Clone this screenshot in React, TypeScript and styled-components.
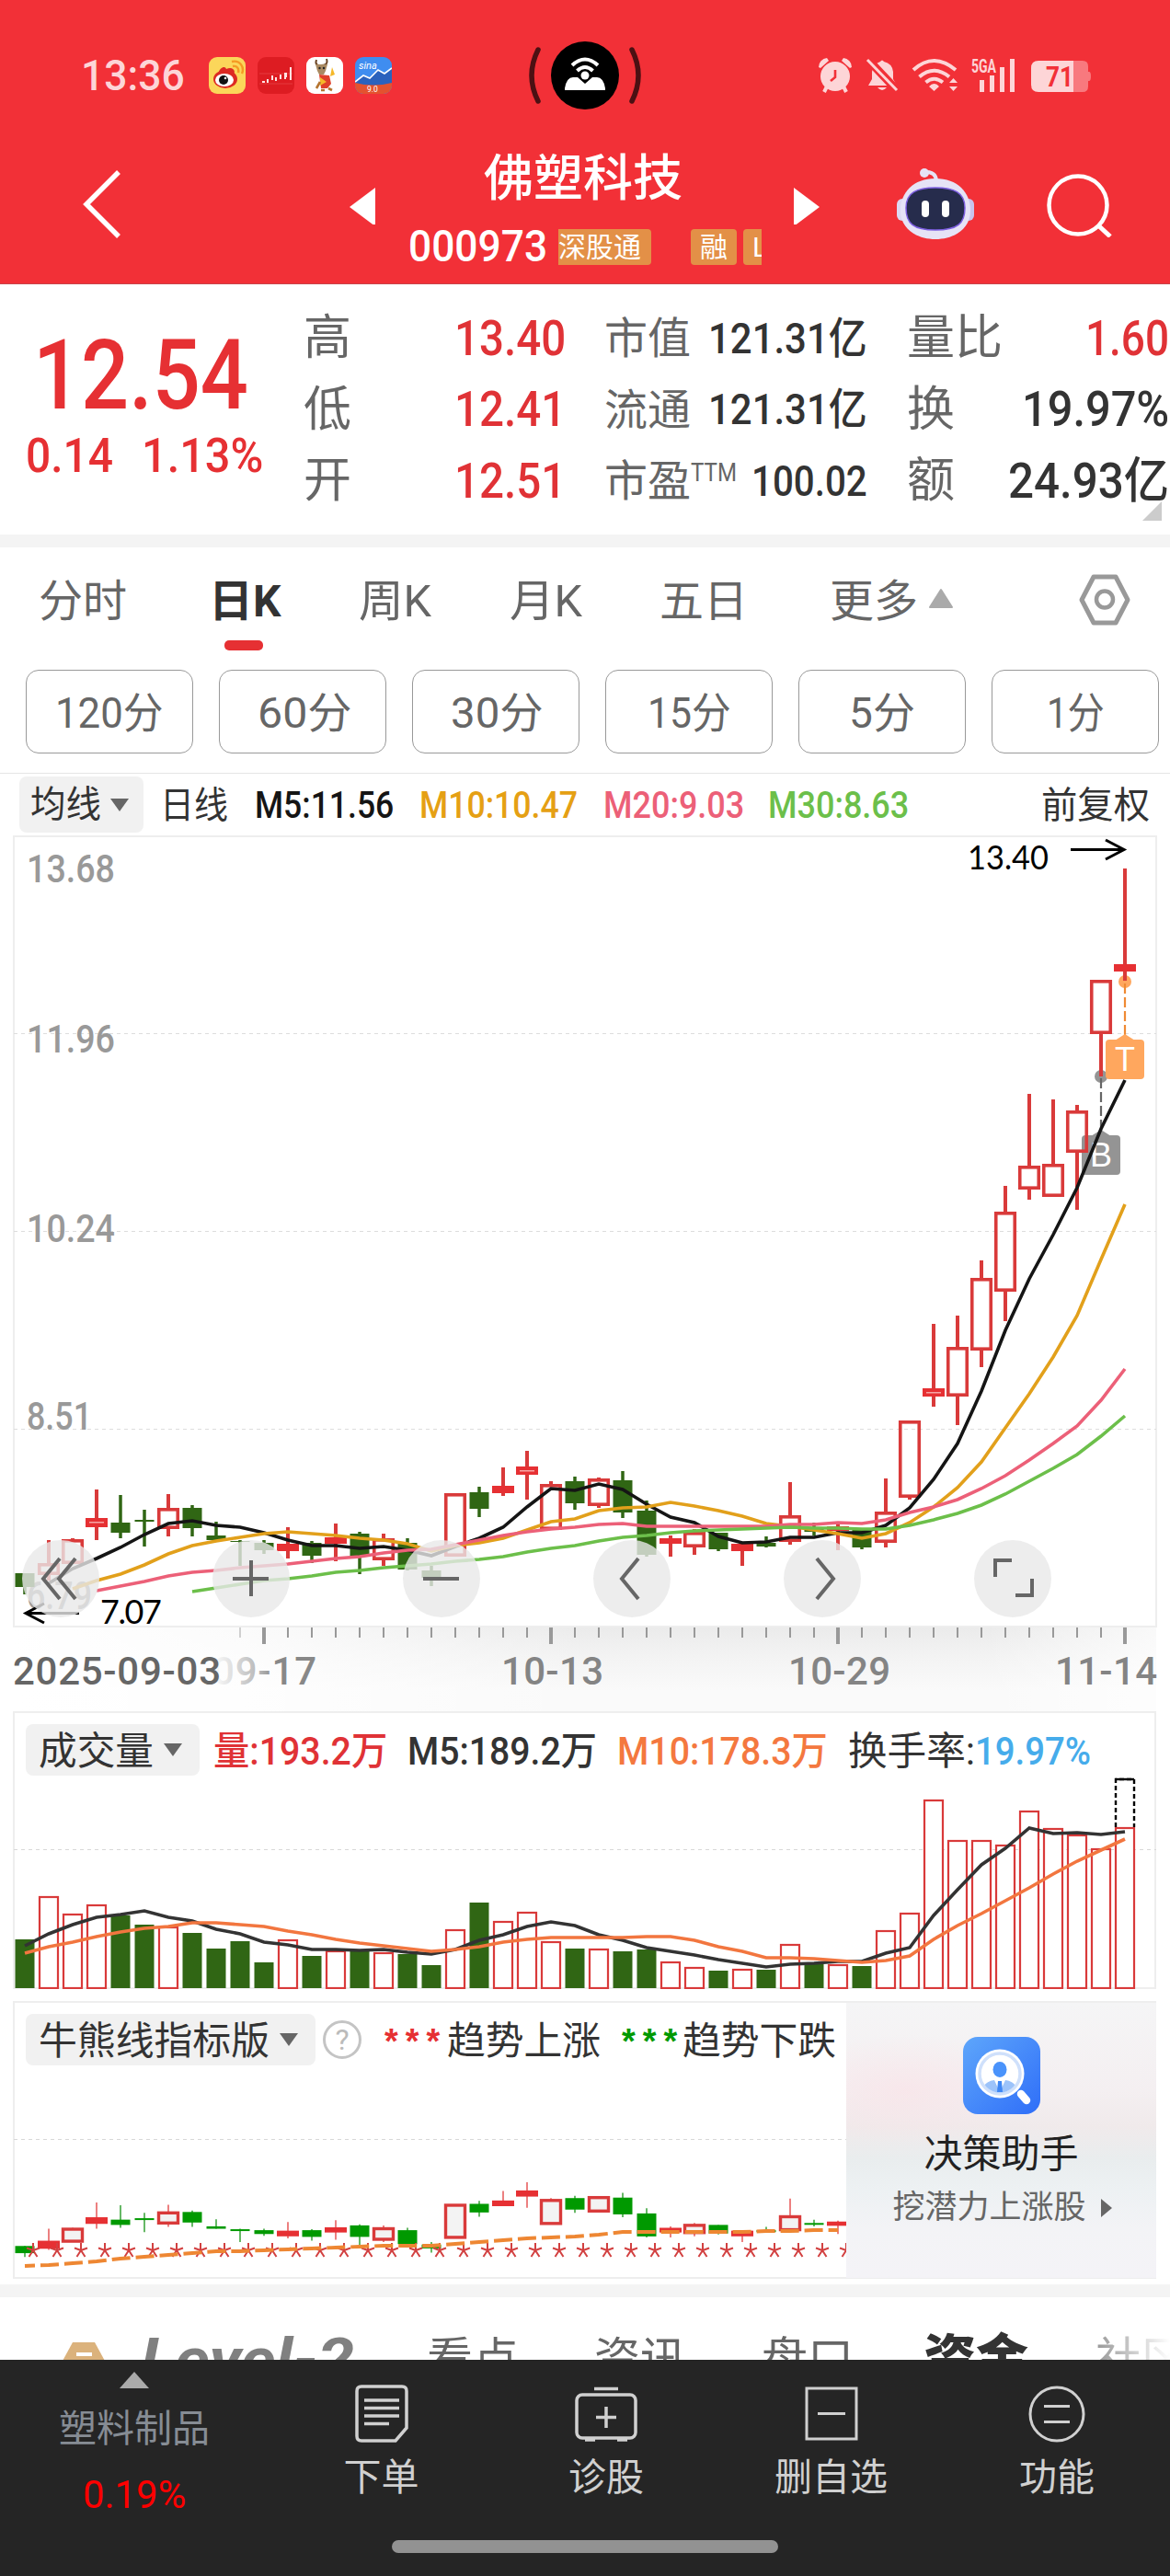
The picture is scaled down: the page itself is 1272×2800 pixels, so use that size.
import React, { useLayoutEffect, useRef, useState } from "react";
import styled, { createGlobalStyle } from "styled-components";

const RED = "#e63033";
const GREEN = "#306614";

const GlobalStyle = createGlobalStyle`
  body {
    margin: 0;
    background: #fff;
  }
  * {
    box-sizing: border-box;
  }
  body, svg text {
    font-family: "Roboto", "Noto Sans CJK SC", sans-serif;
  }
  svg {
    display: block;
    flex: none;
  }
`;

const Page = styled.div`
  width: 1272px;
  height: 2800px;
  overflow: hidden;
  display: flex;
  flex-direction: column;
  background: #fff;
`;

/* ---------- text squeezed to a given width (DIN-like digits) ---------- */

const FitBox = styled.span<{ $w: number; $ml?: number }>`
  display: block;
  flex: none;
  width: ${(p) => p.$w}px;
  margin-left: ${(p) => p.$ml || 0}px;
  white-space: nowrap;
`;
const FitInner = styled.span`
  display: inline-block;
  transform-origin: 0 50%;
  white-space: pre;
`;

type FitProps = { w: number; ml?: number; className?: string; children: React.ReactNode };

const Fit: React.FC<FitProps> = ({ w, ml, className, children }) => {
  const ref = useRef<HTMLSpanElement>(null);
  const [scale, setScale] = useState(1);
  useLayoutEffect(() => {
    if (ref.current && ref.current.offsetWidth) {
      setScale(w / ref.current.offsetWidth);
    }
  }, [w, children]);
  return (
    <FitBox $w={w} $ml={ml} className={className}>
      <FitInner ref={ref} style={{ transform: `scaleX(${scale})` }}>
        {children}
      </FitInner>
    </FitBox>
  );
};

/* ---------- header ---------- */

const Header = styled.header`
  height: 309px;
  background: #f23037;
  border-bottom: 1px solid #c9444a;
  color: #fff;
`;
const StatusBar = styled.div`
  height: 164px;
  display: flex;
  align-items: center;
  padding-left: 88px;
`;
const Clock = styled(Fit)`
  font-size: 46px;
  font-weight: 500;
  line-height: 54px;
  color: #fdd5d7;
`;
const AppIcons = styled.div`
  display: flex;
  gap: 13px;
  margin-left: 26px;
`;
const NavRow = styled.div`
  height: 144px;
  display: flex;
  align-items: center;
  padding: 0 0 28px 88px;
`;
const Spacer = styled.div<{ $w: number; $h?: number }>`
  flex: none;
  width: ${(p) => p.$w}px;
  height: ${(p) => p.$h || 0}px;
`;
const TitleBlock = styled.div`
  align-self: flex-start;
  width: 384px;
`;
const StockName = styled.div`
  height: 60px;
  line-height: 62px;
  padding-left: 82px;
  font-size: 54px;
  font-weight: 500;
`;
const CodeRow = styled.div`
  height: 42px;
  margin-top: 23px;
  display: flex;
  align-items: center;
`;
const Code = styled(Fit)`
  font-size: 49px;
  font-weight: 500;
  line-height: 44px;
`;
const Marquee = styled.div`
  display: flex;
  width: 221px;
  margin-left: 12px;
  overflow: hidden;
`;
const Tag = styled.div<{ $w: number; $ml?: number; $cut?: boolean }>`
  flex: none;
  width: ${(p) => p.$w}px;
  height: 39px;
  margin-left: ${(p) => p.$ml || 0}px;
  border-radius: ${(p) => (p.$cut ? "0 4px 4px 0" : "4px")};
  padding-left: ${(p) => (p.$cut ? 0 : 10)}px;
  background: #e39047;
  font-size: 30px;
  line-height: 39px;
  white-space: nowrap;
`;

/* ---------- quote ---------- */

const Quote = styled.section`
  position: relative;
  height: 272px;
  display: flex;
`;
const PriceBlock = styled.div`
  width: 331px;
  padding: 40px 0 0 36px;
  color: ${RED};
`;
const Price = styled(Fit)`
  font-size: 105px;
  font-weight: 500;
  line-height: 120px;
`;
const ChangeRow = styled.div`
  display: flex;
  margin: 0 0 0 -8px;
  font-size: 52px;
  line-height: 54px;
  font-weight: 500;
`;
const StatCol = styled.div<{ $w: number; $ml?: number }>`
  width: ${(p) => p.$w}px;
  margin-left: ${(p) => p.$ml || 0}px;
  padding-top: 20px;
  flex: none;
`;
const StatRow = styled.div`
  height: 77.5px;
  display: flex;
  justify-content: space-between;
  align-items: center;
  line-height: 78px;
  white-space: nowrap;
`;
const StatLabel = styled.span<{ $size: number }>`
  display: flex;
  padding-top: 1px;
  font-size: ${(p) => p.$size}px;
  color: #666;
`;
const Ttm = styled(Fit)`
  font-size: 27px;
  line-height: 60px;
`;
const StatValue = styled(Fit)<{ $size: number; $red?: boolean }>`
  font-size: ${(p) => p.$size}px;
  font-weight: 500;
  color: ${(p) => (p.$red ? "#e03236" : "#333")};
`;
const Corner = styled.div`
  position: absolute;
  left: 1242px;
  top: 236px;
  border-left: 21px solid transparent;
  border-bottom: 21px solid #ccc;
`;
const Band = styled.div<{ $h: number }>`
  flex: none;
  height: ${(p) => p.$h}px;
  background: #f4f4f4;
`;

/* ---------- period tabs ---------- */

const Tabs = styled.nav`
  height: 133px;
  display: flex;
  align-items: flex-start;
  padding: 12px 0 0 42px;
  color: #666;
`;
const Tab = styled.div<{ $ml?: number; $on?: boolean }>`
  flex: none;
  display: flex;
  flex-direction: column;
  align-items: center;
  margin-left: ${(p) => p.$ml || 0}px;
  font-size: 48px;
  line-height: 94px;
  font-weight: ${(p) => (p.$on ? 700 : 400)};
  color: ${(p) => (p.$on ? "#333" : "#666")};
  &::after {
    content: "";
    display: ${(p) => (p.$on ? "block" : "none")};
    width: 42px;
    height: 11px;
    margin: -5px 3px 0 0;
    border-radius: 5px;
    background: ${RED};
  }
`;
const MoreArrow = styled.svg`
  margin-left: 11px;
`;
const SettingsIcon = styled.svg`
  margin-left: 134px;
`;
const Minutes = styled.div`
  height: 112px;
  display: flex;
  gap: 28px;
  padding-left: 28px;
  flex: none;
`;
const MinuteButton = styled.button`
  flex: none;
  width: 182px;
  height: 91px;
  padding: 0;
  border: 1.5px solid #999;
  border-radius: 14px;
  background: #fff;
  color: #666;
  font: 400 46px/93px "Roboto", "Noto Sans CJK SC", sans-serif;
  display: flex;
  justify-content: center;
`;
const MaRow = styled.div`
  flex: none;
  height: 68px;
  border-top: 1px solid #e5e5e5;
  display: flex;
  align-items: flex-start;
  padding: 3px 0 0 21px;
  font-size: 40px;
  line-height: 64px;
  font-weight: 500;
`;
const Pill = styled.div<{ $w: number; $h: number; $pl: number }>`
  flex: none;
  width: ${(p) => p.$w}px;
  height: ${(p) => p.$h}px;
  padding-left: ${(p) => p.$pl}px;
  display: flex;
  align-items: center;
  border-radius: 8px;
  background: #f1f1f1;
  color: #333;
  font-weight: 400;
`;
const Legend = styled(Fit)<{ $c: string; $normal?: boolean }>`
  color: ${(p) => p.$c};
  font-weight: ${(p) => (p.$normal ? 400 : 500)};
`;
const DownTri = styled.i<{ $ml: number; $s?: number }>`
  margin-left: ${(p) => p.$ml}px;
  border: ${(p) => (p.$s || 10) + 0.5}px solid transparent;
  border-top: 14px solid #666;
  border-bottom: 0;
`;

/* ---------- charts ---------- */

const KPanel = styled.section`
  position: relative;
  flex: none;
  height: 952px;
`;
const RoundButtons = styled.div`
  position: absolute;
  left: 24px;
  top: 766px;
  display: flex;
  gap: 123px;
`;
const RoundButton = styled.button`
  width: 84px;
  height: 84px;
  padding: 0;
  border: 0;
  border-radius: 50%;
  background: rgba(232, 232, 232, 0.8);
  display: flex;
  align-items: center;
  justify-content: center;
`;
const VolumePanel = styled.section`
  position: relative;
  flex: none;
  width: 1243px;
  height: 302px;
  margin-left: 14px;
  border: 2px solid #eee;
`;
const BullPanel = styled(VolumePanel)`
  margin-top: 13px;
  display: flex;
`;
const PanelHead = styled.div`
  display: flex;
  align-items: center;
  height: 56px;
  margin: 12px 0 0 12px;
  font-size: 42px;
  line-height: 56px;
  font-weight: 500;
  ${FitBox} {
    padding-top: 3px;
  }
`;
const PlotLayer = styled.div<{ $w: number }>`
  position: absolute;
  left: -2px;
  top: -2px;
  width: ${(p) => p.$w}px;
  height: 302px;
  overflow: hidden;
  pointer-events: none;
`;
const Help = styled.div`
  width: 42px;
  height: 42px;
  flex: none;
  margin-left: 8px;
  border: 3px solid #c4c4c4;
  border-radius: 50%;
  color: #bbb;
  font-size: 32px;
  font-weight: 400;
  line-height: 36px;
  text-align: center;
`;
const Stars = styled.span<{ $c: string; $ml: number }>`
  flex: none;
  width: 70px;
  margin-left: ${(p) => p.$ml}px;
  color: ${(p) => p.$c};
  font-family: "Liberation Mono", monospace;
  font-weight: 700;
  font-size: 38px;
  line-height: 56px;
  padding-top: 11px;
`;
const Assistant = styled.div`
  position: absolute;
  right: -2px;
  top: 0;
  width: 337px;
  height: 299px;
  padding-top: 37px;
  display: flex;
  flex-direction: column;
  align-items: center;
  background: radial-gradient(ellipse 130px 60px at 65px 95px, rgba(250, 225, 230, 0.6), transparent),
    linear-gradient(#f5f5f6 0%, #f4eff1 32%, #f0eaeb 45%, #e9edee 57%, #edf1f3 68%, #f3f3f6 82%, #f4f3f7 100%);
`;
const AssistantTitle = styled.div`
  margin-top: 14px;
  font-size: 42px;
  line-height: 60px;
  color: #222;
`;
const AssistantSub = styled.div`
  display: flex;
  align-items: center;
  padding-left: 2px;
  font-size: 35px;
  line-height: 56px;
  color: #666;
  i {
    margin-left: 16px;
    border: 10px solid transparent;
    border-left: 12px solid #666;
    border-right: 0;
  }
`;

/* ---------- bottom ---------- */

const InfoTabs = styled.nav`
  position: relative;
  flex: none;
  height: 68px;
  overflow: hidden;
  display: flex;
  padding: 31px 0 0 66px;
  color: #666;
  font-size: 50px;
  line-height: 74px;
  white-space: nowrap;
`;
const InfoTab = styled.div<{ $ml: number; $on?: boolean }>`
  flex: none;
  margin-left: ${(p) => p.$ml}px;
  font-size: ${(p) => (p.$on ? 57 : 50)}px;
  font-weight: ${(p) => (p.$on ? 900 : 400)};
  color: ${(p) => (p.$on ? "#333" : "inherit")};
`;
const Level2 = styled(Fit)`
  font-weight: 700;
  font-style: italic;
  font-size: 62px;
  color: #808080;
`;
const FadeRight = styled.div`
  position: absolute;
  right: 0;
  top: 0;
  width: 90px;
  height: 68px;
  background: linear-gradient(90deg, rgba(255, 255, 255, 0.25), #fff);
`;
const NavBar = styled.footer`
  flex: none;
  height: 235px;
  background: #252525;
  color: #d0d0d0;
  font-size: 41px;
  line-height: 60px;
`;
const NavItems = styled.div`
  display: grid;
  grid-template-columns: 292px 245px 244px 245px 246px;
  height: 196px;
`;
const NavItem = styled.div`
  display: flex;
  flex-direction: column;
  align-items: center;
  padding-top: 24px;
  svg {
    margin-bottom: 6px;
  }
`;
const Sector = styled.div`
  display: flex;
  flex-direction: column;
  align-items: center;
  padding-top: 13px;
  color: #868c94;
  i {
    border: 16px solid transparent;
    border-bottom: 18px solid #aaa;
    border-top: 0;
    margin-bottom: 14px;
  }
  b {
    margin-top: 11px;
    font-weight: 400;
    font-size: 43px;
    color: #f00;
  }
`;
const HomeBar = styled.div`
  width: 420px;
  height: 14px;
  margin: 0 auto;
  border-radius: 7px;
  background: #929292;
`;

/* ---------- data: [dir, high, top, bottom, low] in plot pixels ---------- */

type Candle = [0 | 1, number, number, number, number];

const candles: Candle[] = [
  [0, 1710, 1710, 1725, 1733], [1, 1674, 1699, 1712, 1718], [1, 1672, 1673, 1700, 1700],
  [1, 1619, 1650, 1660, 1674], [0, 1625, 1655, 1666, 1672], [0, 1641, 1652, 1654, 1681],
  [1, 1624, 1639, 1662, 1670], [0, 1636, 1639, 1661, 1670], [0, 1654, 1669, 1674, 1674],
  [0, 1674, 1675, 1676, 1702], [0, 1674, 1677, 1685, 1689], [1, 1660, 1678, 1686, 1694],
  [0, 1675, 1677, 1691, 1699], [1, 1656, 1671, 1678, 1697], [0, 1665, 1667, 1691, 1711],
  [1, 1667, 1672, 1696, 1702], [0, 1672, 1677, 1706, 1707], [0, 1702, 1707, 1715, 1724],
  [1, 1623, 1623, 1692, 1692], [0, 1616, 1622, 1640, 1649], [1, 1595, 1615, 1623, 1626],
  [1, 1577, 1594, 1603, 1630], [1, 1610, 1613, 1663, 1663], [0, 1605, 1610, 1634, 1641],
  [1, 1606, 1607, 1637, 1639], [0, 1599, 1609, 1644, 1650], [0, 1631, 1642, 1690, 1692],
  [1, 1669, 1672, 1678, 1692], [1, 1662, 1665, 1682, 1690], [0, 1666, 1666, 1684, 1686],
  [1, 1678, 1678, 1686, 1702], [0, 1670, 1677, 1681, 1682], [1, 1611, 1647, 1676, 1679],
  [0, 1655, 1662, 1665, 1669], [1, 1657, 1659, 1664, 1685], [0, 1662, 1663, 1682, 1684],
  [1, 1607, 1643, 1677, 1682], [1, 1544, 1544, 1628, 1630], [1, 1439, 1509, 1518, 1529],
  [1, 1430, 1464, 1518, 1549], [1, 1370, 1389, 1468, 1486], [1, 1289, 1317, 1404, 1436],
  [1, 1189, 1267, 1293, 1304], [1, 1195, 1265, 1301, 1301], [1, 1201, 1207, 1253, 1315],
  [1, 1065, 1065, 1124, 1170], [1, 944, 1048, 1056, 1066],
];

const ma5 = [
  1721, 1705, 1694, 1682, 1668, 1656, 1653, 1658, 1660, 1666, 1674, 1680, 1680, 1683, 1681, 1685,
  1691, 1681, 1672, 1660, 1638, 1618, 1620, 1613, 1619, 1635, 1649, 1655, 1670, 1677, 1676, 1671,
  1671, 1666, 1666, 1658, 1639, 1608, 1569, 1512, 1446, 1390, 1342, 1291, 1227, 1174,
];
const ma10 = [
  1727, 1718, 1711, 1701, 1689, 1680, 1675, 1671, 1667, 1665, 1667, 1669, 1672, 1674, 1678, 1686,
  1680, 1677, 1672, 1663, 1654, 1651, 1642, 1639, 1638, 1633, 1637, 1642, 1648, 1656, 1659, 1663,
  1667, 1672, 1667, 1655, 1638, 1617, 1589, 1552, 1515, 1475, 1430, 1369, 1309,
];
const ma20 = [
  1729, 1724, 1719, 1713, 1709, 1707, 1704, 1702, 1700, 1697, 1694, 1692, 1688, 1685, 1684, 1679,
  1674, 1669, 1665, 1662, 1660, 1657, 1656, 1659, 1659, 1659, 1659, 1659, 1659, 1657, 1657, 1655,
  1656, 1652, 1644, 1638, 1630, 1618, 1604, 1587, 1569, 1550, 1522, 1488,
];
const ma30 = [
  1730, 1726, 1722, 1718, 1716, 1713, 1709, 1707, 1704, 1702, 1700, 1697, 1695, 1692, 1687, 1683,
  1680, 1675, 1671, 1669, 1666, 1664, 1663, 1662, 1661, 1660, 1661, 1661, 1662, 1662, 1658, 1652,
  1645, 1636, 1624, 1610, 1596, 1581, 1561, 1539,
];

const volumes = [
  2108, 2061, 2080, 2070, 2082, 2092, 2094, 2101, 2118, 2110, 2133, 2108, 2126, 2120, 2121, 2122,
  2124, 2136, 2097, 2068, 2088, 2078, 2110, 2118, 2118, 2121, 2119, 2132, 2138, 2142, 2140, 2141,
  2113, 2135, 2135, 2137, 2098, 2079, 1956, 2000, 2000, 2005, 1968, 1987, 1994, 2009, 1986,
];
const vma5 = [
  2115, 2102, 2092, 2084, 2081, 2077, 2084, 2088, 2097, 2102, 2111, 2114, 2119, 2119, 2120, 2119,
  2122, 2124, 2119, 2109, 2103, 2094, 2089, 2093, 2103, 2109, 2117, 2121, 2125, 2130, 2134, 2138,
  2135, 2134, 2132, 2132, 2123, 2117, 2082, 2054, 2027, 2009, 1987, 1993, 1992, 1994, 1991,
];
const vma10 = [
  2123, 2116, 2111, 2105, 2100, 2096, 2094, 2090, 2090, 2092, 2094, 2099, 2103, 2108, 2112, 2115,
  2118, 2121, 2119, 2116, 2111, 2108, 2106, 2106, 2106, 2106, 2105, 2105, 2109, 2116, 2121, 2128,
  2128, 2129, 2131, 2133, 2131, 2126, 2108, 2093, 2080, 2066, 2052, 2037, 2023, 2011, 1999,
];
const bull = [
  2463, 2462, 2460, 2458, 2455, 2453, 2451, 2449, 2447, 2447, 2446, 2445, 2444, 2443, 2442, 2441,
  2441, 2441, 2439, 2437, 2435, 2433, 2432, 2431, 2429, 2426, 2426, 2426, 2426, 2426, 2426, 2425,
  2425, 2424, 2424,
];

const px = (i: number) => 27 + i * 26;
const line = (ys: number[], from: number) => ys.map((y, i) => `${px(i + from)},${y}`).join(" ");
const mini = (y: number) => 2396 + (y - 1623) * 0.5205;

const Curve: React.FC<{ ys: number[]; from: number; color: string }> = ({ ys, from, color }) => (
  <polyline points={line(ys, from)} fill="none" stroke={color} strokeWidth="3.6" />
);

const Marker: React.FC<{ x: number; dot: number; y: number; color: string; dash: string; text: string }> = ({
  x,
  dot,
  y,
  color,
  dash,
  text,
}) => (
  <g>
    <circle cx={x} cy={dot} r="7" fill={color} />
    <path d={`M${x} ${dot + 2}V${y - 5}`} stroke={dash} strokeWidth="2.2" strokeDasharray="11 4" />
    <path d={`M${x - 11} ${y + 1}L${x} ${y - 6}L${x + 11} ${y + 1}Z`} fill={color} />
    <rect x={x - 21} y={y} width="42" height="43" rx="4" fill={color} />
    <text x={x} y={y + 34} fontSize="36" fill="#fff" textAnchor="middle" style={{ fontFamily: "Liberation Sans" }}>
      {text}
    </text>
  </g>
);

const grids = [1123.5, 1338.5, 1553.5];
const prices: [string, number, number][] = [
  ["13.68", 959, 96],
  ["11.96", 1144, 96],
  ["10.24", 1350, 96],
  ["8.51", 1554, 71],
  ["6.79", 1749, 71],
];

const KLine: React.FC = () => (
  <svg width="1272" height="952" viewBox="0 908 1272 952">
    <defs>
      <linearGradient id="axisY" x1="0" y1="0" x2="0" y2="1">
        <stop offset="0" stopColor="#ebebeb" />
        <stop offset="0.35" stopColor="#f3f3f3" />
        <stop offset="0.75" stopColor="#fafafa" />
        <stop offset="1" stopColor="#fafafa" />
      </linearGradient>
      <linearGradient id="axisX">
        <stop offset="0" stopColor="#fff" />
        <stop offset="0.2" stopColor="#fff" stopOpacity="0.8" />
        <stop offset="0.5" stopColor="#fff" stopOpacity="0" />
        <stop offset="0.85" stopColor="#fff" stopOpacity="0" />
        <stop offset="1" stopColor="#fff" stopOpacity="0.7" />
      </linearGradient>
      <linearGradient id="dateFade">
        <stop offset="0" stopColor="#888" stopOpacity="0" />
        <stop offset="0.45" stopColor="#888" stopOpacity="0.6" />
        <stop offset="0.6" stopColor="#888" />
      </linearGradient>
    </defs>
    <rect x="15" y="909" width="1242" height="859" fill="none" stroke="#eee" strokeWidth="2" />
    {grids.map((y) => (
      <path key={y} d={`M15 ${y}H1257`} stroke="#ddd" strokeWidth="1" strokeDasharray="4 4" />
    ))}
    {prices.map(([t, y, w]) => (
      <text key={t} x="29" y={y} fontSize="42" fontWeight="500" fill="#999" textLength={w} lengthAdjust="spacingAndGlyphs">
        {t}
      </text>
    ))}
    <Marker x={1197} dot={1170} y={1234} color="#949494" dash="#666" text="B" />
    <Marker x={1223} dot={1067} y={1130} color="#ffa75e" dash="#ef8a34" text="T" />
    {candles.map(([up, h, t, b, l], i) =>
      up ? (
        <g key={i} stroke="#d93a3a">
          <path d={`M${px(i)} ${h}V${t}M${px(i)} ${b}V${l}`} strokeWidth="4" />
          {b - t <= 10 ? (
            <>
              <rect x={px(i) - 12} y={t} width="24" height={b - t} fill={RED} stroke="none" />
              {b - t > 8 && <rect x={px(i) - 8} y={t + 4} width="16" height="1.5" fill="#f6a5a5" stroke="none" />}
            </>
          ) : (
            <rect x={px(i) - 10.25} y={t + 1.8} width="20.5" height={b - t - 3.6} fill="none" strokeWidth="3.6" />
          )}
        </g>
      ) : (
        <g key={i}>
          <path d={`M${px(i)} ${h}V${l}`} stroke={GREEN} strokeWidth="3.5" />
          <rect x={px(i) - 10.5} y={t} width="21" height={b - t} fill={GREEN} />
        </g>
      )
    )}
    <Curve ys={ma5} from={1} color="#151515" />
    <Curve ys={ma10} from={2} color="#e2a01b" />
    <Curve ys={ma20} from={3} color="#ec6078" />
    <Curve ys={ma30} from={7} color="#6cbf4a" />

    <text x="1052" y="945" fontSize="36" textLength="88" lengthAdjust="spacingAndGlyphs" style={{ fontFamily: "Lato" }}>
      13.40
    </text>
    <path d="M1164 923.5H1221M1202 913L1222 923.5L1202 934" fill="none" stroke="#000" strokeWidth="3" />
    <text x="109" y="1765" fontSize="36" textLength="67" style={{ fontFamily: "Lato" }}>
      7.07
    </text>
    <path d="M86 1753.5H28M48 1743L28 1753.5L48 1764" fill="none" stroke="#000" strokeWidth="3" />

    <rect x="15" y="1769" width="1242" height="91" fill="url(#axisY)" />
    <rect x="15" y="1769" width="1242" height="91" fill="url(#axisX)" />
    {candles.map((_, i) => {
      if (i < 9) {
        return null;
      }
      const major = i % 12 === 10;
      return (
        <path
          key={i}
          d={`M${px(i)} 1769V${major ? 1787 : 1780}`}
          stroke={i === 9 ? "#d0d0d0" : "#999"}
          strokeWidth={major ? 4 : 2}
        />
      );
    })}
    <g fontSize="42" fontWeight="500" fill="#848484">
      <text x="231" y="1831" fill="url(#dateFade)" textLength="113">09-17</text>
      <text x="545" y="1831" textLength="111">10-13</text>
      <text x="857" y="1831" textLength="111">10-29</text>
      <text x="1147" y="1831" textLength="111">11-14</text>
      <text x="14" y="1831" fill="#666" textLength="226">2025-09-03</text>
    </g>
  </svg>
);

const VolumePlot: React.FC = () => (
  <svg width="1243" height="302" viewBox="14 1860 1243 302">
    <path d="M15 2010.5H1257" stroke="#d8d8d8" strokeWidth="1" strokeDasharray="4 4" />
    {volumes.map((y, i) =>
      candles[i][0] ? (
        <rect key={i} x={px(i) - 10} y={y + 1} width="20" height={2160 - y} fill="#fff" stroke="#d93a3a" strokeWidth="2.2" />
      ) : (
        <rect key={i} x={px(i) - 10.5} y={y} width="21" height={2161 - y} fill={GREEN} />
      )
    )}
    <path d="M1213 1986V1934H1233V1986" fill="none" stroke="#000" strokeWidth="2.4" strokeDasharray="5 3" />
    <path d="M1213 1934H1233" stroke="#000" strokeWidth="2.4" />
    <Curve ys={vma5} from={0} color="#333" />
    <Curve ys={vma10} from={0} color="#f2763f" />
  </svg>
);

const BullPlot: React.FC = () => (
  <svg width="907" height="302" viewBox="14 2175 907 302">
    <path d="M15 2325.5H921" stroke="#d8d8d8" strokeWidth="1" strokeDasharray="4 4" />
    {candles.slice(0, 35).map(([up, h, t, b, l], i) => {
      const top = mini(t);
      const height = Math.max(mini(b) - top, 2);
      return (
        <g key={i}>
          <path d={`M${px(i)} ${mini(h)}V${mini(l)}`} stroke={up ? "#ec8080" : "#66b866"} strokeWidth="2" />
          {up ? (
            height > 8 ? (
              <rect x={px(i) - 10.5} y={top + 1} width="21" height={height - 1} fill="#f3f3f3" stroke="#d93a3a" strokeWidth="3.4" />
            ) : (
              <rect x={px(i) - 12} y={top} width="24" height={height + 2} fill={RED} />
            )
          ) : (
            <rect x={px(i) - 10.5} y={top} width="21" height={height} fill="#009900" />
          )}
        </g>
      );
    })}
    {candles.slice(0, 35).map((_, i) => (
      <path
        key={i}
        transform={`translate(${px(i) + 9} 2446)`}
        d="M0 0V-8M0 0L7 -2.5M0 0L4.5 7M0 0L-4.5 7M0 0L-7 -2.5"
        stroke="#d24040"
        strokeWidth="2"
      />
    ))}
    <polyline points={line(bull, 0)} fill="none" stroke="#ee8733" strokeWidth="4" strokeDasharray="20 6" strokeDashoffset="9" />
  </svg>
);

/* ---------- icons ---------- */

const WeiboIcon = () => (
  <svg width="40" height="40" viewBox="0 0 40 40">
    <rect width="40" height="40" rx="9" fill="#fbd65a" />
    <ellipse cx="18" cy="24" rx="13" ry="10" fill="#dd2a22" />
    <path d="M10 18C12 11 18 9 19 13C25 10 30 14 27 19Z" fill="#dd2a22" />
    <ellipse cx="17" cy="25" rx="10" ry="7" fill="#fff" />
    <circle cx="16" cy="25" r="5" fill="#111" />
    <circle cx="18" cy="23" r="1.3" fill="#fff" />
    <path d="M26 10C31 9 33 13 32 17M25 5C34 3 39 11 36 18" fill="none" stroke="#f59a23" strokeWidth="2.4" />
  </svg>
);
const CandleApp = () => (
  <svg width="40" height="40" viewBox="0 0 40 40">
    <rect width="40" height="40" rx="9" fill="#dd1c22" />
    <path d="M2 18H38M2 29H38" stroke="#e8474b" strokeWidth="0.7" />
    <path d="M5 27H8M11 24V28M16 20V25M20 22V26M25 19V24M30 17V24M36 11V25M31 22V17" stroke="#ffe3e3" strokeWidth="2" fill="none" />
  </svg>
);
const BullApp = () => (
  <svg width="40" height="40" viewBox="0 0 40 40">
    <rect width="40" height="40" rx="9" fill="#fff" />
    <path d="M11 3C9 9 13 9 16 9C20 9 24 8 22 2" fill="none" stroke="#6b4423" strokeWidth="2" />
    <path d="M10 8H23L21 15L19 19H14L12 15Z" fill="#a98a62" />
    <path d="M14 19L25 20L27 29L23 34H16Z" fill="#e0402a" />
    <path d="M26 21L28 11L31 19ZM15 22L22 27L15 31Z" fill="#f5b829" />
    <path d="M11 34L15 27M16 36H20M24 34L28 36" stroke="#b5742f" strokeWidth="2.6" />
    <circle cx="14.500" cy="12" r="1.2" fill="#222" />
    <circle cx="19" cy="12" r="1.2" fill="#222" />
  </svg>
);
const SinaApp = () => (
  <svg width="40" height="40" viewBox="0 0 40 40">
    <clipPath id="sina">
      <rect width="40" height="40" rx="9" />
    </clipPath>
    <g clipPath="url(#sina)">
      <rect width="40" height="40" fill="#3f8df0" />
      <path d="M0 27L9 20L16 23L25 14L32 18L40 12V32H0Z" fill="#2b62bd" />
      <path d="M0 27L9 20L16 23L25 14L32 18L40 12" fill="none" stroke="#fff" strokeWidth="1.6" />
      <path d="M0 28Q20 33 40 28V40H0Z" fill="#e4522f" />
      <text x="4" y="13" fontSize="11" fontStyle="italic" fill="#fff">sina</text>
      <text x="13" y="38" fontSize="8.500" fill="#fff">9.0</text>
    </g>
  </svg>
);
const Hotspot = () => (
  <svg width="128" height="76" viewBox="-8 0 128 76">
    <circle cx="56" cy="38" r="37" fill="#000" />
    <path d="M5 10Q-9 38 5 66M107 10Q121 38 107 66" fill="none" stroke="#4c1013" strokeWidth="5.500" strokeLinecap="round" />
    <path d="M34 52Q36 40 43 40H48L56 47L64 40H69Q76 40 78 52V54H34Z" fill="#fff" />
    <path d="M42 27Q56 14 70 27M47.5 33Q56 25 64.5 33" fill="none" stroke="#fff" strokeWidth="4" />
    <circle cx="56" cy="38" r="4.5" fill="#fff" />
  </svg>
);
const StatusIcons = () => (
  <svg width="300" height="40" viewBox="886 62 300 40" fill="#fdd5d7">
    <circle cx="908" cy="83" r="16" />
    <path d="M890 73A10 10 0 0 1 899 63L901 66L892 74ZM926 73A10 10 0 0 0 917 63L915 66L924 74Z" />
    <path d="M899 94L896 100M917 94L920 100" stroke="#fdd5d7" strokeWidth="4" />
    <path d="M908 76V84L903 88" fill="none" stroke="#f23037" strokeWidth="2.6" />
    <path d="M957 67Q959 64 961 67Q970 69 971 78V86L975 93H944L948 86V78Q949 70 957 67Z" />
    <path d="M954 95Q959 101 964 95Z" />
    <path d="M942 63L977 100" stroke="#f23037" strokeWidth="9" />
    <path d="M943 65L975 98" stroke="#fdd5d7" strokeWidth="3" />
    <path d="M993 76Q1015 56 1039 76M999.500 83.500Q1015.500 70 1032 83.500M1006.500 89.500Q1015.500 82 1025 89.500" fill="none" stroke="#fdd5d7" strokeWidth="4" />
    <path d="M1010 94Q1015.500 88 1021 94L1015.500 99ZM1032 90L1036.500 85L1041 90ZM1032 94L1036.500 99L1041 94Z" />
    <text x="1056" y="79" fontSize="21" fontWeight="700" textLength="27" lengthAdjust="spacingAndGlyphs">5GA</text>
    <path d="M1065 87h5v13h-5zM1076 82h5v18h-5zM1087 73h5v27h-5zM1098 64h5v36h-5z" />
    <path d="M1167 66H1177Q1183 66 1183 72V78H1184Q1186 78 1186 83Q1186 88 1184 88H1183V94Q1183 100 1177 100H1167Z" fill="#f8797e" />
    <path d="M1129 66H1167V100H1129Q1121 100 1121 92V74Q1121 66 1129 66Z" />
    <text x="1137" y="94" fontSize="32" fontWeight="700" fill="#f23037" textLength="30" lengthAdjust="spacingAndGlyphs">71</text>
  </svg>
);
const Robot = () => (
  <svg width="84" height="78" viewBox="0 0 84 78">
    <circle cx="30" cy="5" r="5" fill="#e6e2f5" />
    <path d="M30 4Q42 3 43 13" fill="none" stroke="#e6e2f5" strokeWidth="4" />
    <rect x="0" y="33" width="12" height="24" rx="6" fill="#dcd8f2" />
    <rect x="72" y="33" width="12" height="24" rx="6" fill="#c9c3ee" />
    <path d="M42 11C66 11 80 26 80 46C80 66 62 77 42 77C22 77 4 66 4 46C4 26 18 11 42 11Z" fill="#e6e3f6" />
    <path d="M42 21C62 21 74 26 74 43C74 60 66 67 42 67C18 67 10 60 10 43C10 26 22 21 42 21Z" fill="#262c4c" stroke="#7d5fe0" strokeWidth="1.500" />
    <rect x="27" y="35" width="8" height="18" rx="4" fill="#fff" />
    <rect x="49" y="35" width="8" height="18" rx="4" fill="#fff" />
  </svg>
);
const DecisionIcon = () => (
  <svg width="84" height="84" viewBox="0 0 84 84">
    <defs>
      <linearGradient id="dec" x1="0" y1="0" x2="1" y2="1">
        <stop offset="0" stopColor="#5ea6fb" />
        <stop offset="1" stopColor="#2f6ef8" />
      </linearGradient>
      <clipPath id="lens">
        <circle cx="40" cy="40" r="20.500" />
      </clipPath>
    </defs>
    <rect width="84" height="84" rx="16" fill="url(#dec)" />
    <circle cx="40" cy="40" r="26.500" fill="#fff" />
    <circle cx="40" cy="40" r="22" fill="#fff" stroke="#cfe0fb" strokeWidth="3.500" />
    <g clipPath="url(#lens)">
      <path d="M22 62V54Q26 48 34 47L40 60L46 47Q54 48 58 54V62Z" fill="#9cc3fa" />
      <path d="M38 48H42L43 60H37Z" fill="#3f87f5" />
    </g>
    <ellipse cx="40" cy="35.500" rx="7.500" ry="8.500" fill="#4a93fb" />
    <path d="M63 62L69 69" stroke="#fff" strokeWidth="8.500" strokeLinecap="round" />
  </svg>
);

const legends: [string, string, number, number][] = [
  ["M5:11.56", "#151515", 151, 29],
  ["M10:10.47", "#e5a014", 172, 28],
  ["M20:9.03", "#ec6078", 153, 28],
  ["M30:8.63", "#6cbf4a", 153, 26],
];

const minutes: [string, number][] = [
  ["120分", 118],
  ["60分", 103],
  ["30分", 101],
  ["15分", 91],
  ["5分", 72],
  ["1分", 63],
];

const buttonPaths = [
  "M41 20L23 42L41 64M58 20L40 42L58 64",
  "M42 22V61M22 42H61",
  "M22 42H61",
  "M49 20L31 42L49 64",
  "M36 20L54 42L36 64",
  "M23 40V22H41M45 60H63V42",
];

const App: React.FC = () => {
  return (
    <Page>
      <GlobalStyle />
      <Header>
        <StatusBar>
          <Clock w={113}>13:36</Clock>
          <AppIcons>
            <WeiboIcon />
            <CandleApp />
            <BullApp />
            <SinaApp />
          </AppIcons>
          <Spacer $w={146} />
          <Hotspot />
          <Spacer $w={186} />
          <StatusIcons />
        </StatusBar>
        <NavRow>
          <svg width="44" height="76" viewBox="0 0 44 76">
            <path d="M41 3L6 38L41 73" fill="none" stroke="#fff" strokeWidth="5.500" />
          </svg>
          <Spacer $w={248} />
          <svg width="28" height="44" viewBox="0 0 28 44">
            <path d="M28 4V46L0 25Z" fill="#fff" />
          </svg>
          <Spacer $w={36} />
          <TitleBlock>
            <StockName>佛塑科技</StockName>
            <CodeRow>
              <Code w={151}>000973</Code>
              <Marquee>
                <Tag $w={101} $cut>深股通</Tag>
                <Tag $w={50} $ml={43}>融</Tag>
                <Tag $w={50} $ml={7}>L</Tag>
              </Marquee>
            </CodeRow>
          </TitleBlock>
          <Spacer $w={35} />
          <svg width="28" height="44" viewBox="0 0 28 44">
            <path d="M0 4V46L28 25Z" fill="#fff" />
          </svg>
          <Spacer $w={84} />
          <Robot />
          <Spacer $w={79} />
          <svg width="72" height="72" viewBox="0 0 72 72">
            <circle cx="34" cy="37" r="31.500" fill="none" stroke="#fff" strokeWidth="4.500" />
            <path d="M56 59L69 71" stroke="#fff" strokeWidth="5" />
          </svg>
        </NavRow>
      </Header>

      <Quote>
        <PriceBlock>
          <Price w={234}>12.54</Price>
          <ChangeRow>
            <Fit w={95}>0.14</Fit>
            <Fit w={132} ml={31}>1.13%</Fit>
          </ChangeRow>
        </PriceBlock>
        <StatCol $w={285} $ml={-1}>
          <StatRow>
            <StatLabel $size={52}>高</StatLabel>
            <StatValue w={121} $size={53} $red>13.40</StatValue>
          </StatRow>
          <StatRow>
            <StatLabel $size={52}>低</StatLabel>
            <StatValue w={121} $size={53} $red>12.41</StatValue>
          </StatRow>
          <StatRow>
            <StatLabel $size={52}>开</StatLabel>
            <StatValue w={121} $size={53} $red>12.51</StatValue>
          </StatRow>
        </StatCol>
        <StatCol $w={286} $ml={42}>
          <StatRow>
            <StatLabel $size={47}>市值</StatLabel>
            <StatValue w={173} $size={47}>121.31亿</StatValue>
          </StatRow>
          <StatRow>
            <StatLabel $size={47}>流通</StatLabel>
            <StatValue w={173} $size={47}>121.31亿</StatValue>
          </StatRow>
          <StatRow>
            <StatLabel $size={47}>
              市盈<Ttm w={50}>TTM</Ttm>
            </StatLabel>
            <StatValue w={126} $size={47}>100.02</StatValue>
          </StatRow>
        </StatCol>
        <StatCol $w={285} $ml={43}>
          <StatRow>
            <StatLabel $size={52}>量比</StatLabel>
            <StatValue w={91} $size={53} $red>1.60</StatValue>
          </StatRow>
          <StatRow>
            <StatLabel $size={52}>换</StatLabel>
            <StatValue w={160} $size={53}>19.97%</StatValue>
          </StatRow>
          <StatRow>
            <StatLabel $size={52}>额</StatLabel>
            <StatValue w={175} $size={53}>24.93亿</StatValue>
          </StatRow>
        </StatCol>
        <Corner />
      </Quote>
      <Band $h={14} />

      <Tabs>
        <Tab>分时</Tab>
        <Tab $ml={89} $on>
          <Fit w={79}>日K</Fit>
        </Tab>
        <Tab $ml={84}>
          <Fit w={79}>周K</Fit>
        </Tab>
        <Tab $ml={85}>
          <Fit w={79}>月K</Fit>
        </Tab>
        <Tab $ml={84}>五日</Tab>
        <Tab $ml={89}>更多</Tab>
        <MoreArrow width="28" height="94" viewBox="0 0 28 94">
          <path d="M14 34L26 53H2Z" fill="#aaa" stroke="#aaa" strokeWidth="2" strokeLinejoin="round" />
        </MoreArrow>
        <SettingsIcon width="60" height="94" viewBox="0 0 60 94">
          <path d="M18 20H42L55 45L42 70H18L5 45Z" fill="none" stroke="#999" strokeWidth="5" strokeLinejoin="round" />
          <circle cx="30" cy="44.500" r="9" fill="none" stroke="#999" strokeWidth="4.500" />
        </SettingsIcon>
      </Tabs>
      <Minutes>
        {minutes.map(([label, w]) => (
          <MinuteButton key={label}>
            <Fit w={w}>{label}</Fit>
          </MinuteButton>
        ))}
      </Minutes>
      <MaRow>
        <Pill $w={135} $h={61} $pl={12}>
          <Fit w={77}>均线</Fit>
          <DownTri $ml={10} />
        </Pill>
        <Legend w={74} ml={18} $c="#333" $normal>日线</Legend>
        {legends.map(([label, color, w, ml]) => (
          <Legend key={label} w={w} ml={ml} $c={color}>
            {label}
          </Legend>
        ))}
        <Legend w={118} ml={144} $c="#333" $normal>前复权</Legend>
      </MaRow>

      <KPanel>
        <KLine />
        <RoundButtons>
          {buttonPaths.map((d) => (
            <RoundButton key={d}>
              <svg width="84" height="84" viewBox="0 0 84 84">
                <path d={d} fill="none" stroke="#666" strokeWidth="4" />
              </svg>
            </RoundButton>
          ))}
        </RoundButtons>
      </KPanel>

      <VolumePanel>
        <PlotLayer $w={1243}>
          <VolumePlot />
        </PlotLayer>
        <PanelHead>
          <Pill $w={189} $h={56} $pl={14}>
            <Fit w={125}>成交量</Fit>
            <DownTri $ml={11} />
          </Pill>
          <Legend w={189} ml={15} $c="#e03236">量:193.2万</Legend>
          <Legend w={206} ml={22} $c="#333">M5:189.2万</Legend>
          <Legend w={229} ml={22} $c="#f4783f">M10:178.3万</Legend>
          <Legend w={138} ml={22} $c="#333" $normal>换手率:</Legend>
          <Legend w={126} $c="#46aceb">19.97%</Legend>
        </PanelHead>
      </VolumePanel>

      <BullPanel>
        <PlotLayer $w={907}>
          <BullPlot />
        </PlotLayer>
        <PanelHead>
          <Pill $w={315} $h={56} $pl={14}>
            <Fit w={251}>牛熊线指标版</Fit>
            <DownTri $ml={11} />
          </Pill>
          <Help>?</Help>
          <Stars $c={RED} $ml={21}>***</Stars>
          <Legend w={167} ml={2} $c="#333" $normal>趋势上涨</Legend>
          <Stars $c="#009900" $ml={19}>***</Stars>
          <Legend w={167} ml={0} $c="#333" $normal>趋势下跌</Legend>
        </PanelHead>
        <Assistant>
          <DecisionIcon />
          <AssistantTitle>决策助手</AssistantTitle>
          <AssistantSub>
            挖潜力上涨股
            <i />
          </AssistantSub>
        </Assistant>
      </BullPanel>
      <Spacer $w={0} $h={6} />
      <Band $h={14} />

      <InfoTabs>
        <svg width="50" height="50" viewBox="0 2 50 50">
          <path d="M13 20H37L49 42L37 64H13L1 42Z" fill="#dbb27c" />
          <rect x="17" y="31" width="17" height="4" fill="#fff" />
          <rect x="14" y="40" width="22" height="20" fill="#fff" />
        </svg>
        <Level2 w={232} ml={37}>Level-2</Level2>
        <InfoTab $ml={79}>看点</InfoTab>
        <InfoTab $ml={82}>资讯</InfoTab>
        <InfoTab $ml={82}>盘口</InfoTab>
        <InfoTab $ml={76} $on>资金</InfoTab>
        <InfoTab $ml={73}>社区</InfoTab>
        <FadeRight />
      </InfoTabs>

      <NavBar>
        <NavItems>
          <Sector>
            <i />
            <span>塑料制品</span>
            <b>
              <Fit w={112}>0.19%</Fit>
            </b>
          </Sector>
          <NavItem>
            <svg width="60" height="68" viewBox="0 0 60 68" fill="none" stroke="#d0d0d0" strokeWidth="3.500">
              <path d="M8 5H52Q57 5 57 10V50L45 64H8Q3 64 3 59V10Q3 5 8 5Z" />
              <path d="M11 20H49M11 28.500H49M11 37H49M11 45.500H38" />
            </svg>
            下单
          </NavItem>
          <NavItem>
            <svg width="70" height="68" viewBox="0 0 70 68" fill="none" stroke="#d0d0d0" strokeWidth="3.500">
              <rect x="3" y="14" width="64" height="47" rx="6" />
              <path d="M22 7.500H48M35 27V50M24 38.500H46M12 63H23M47 63H58" />
            </svg>
            诊股
          </NavItem>
          <NavItem>
            <svg width="60" height="68" viewBox="0 0 60 68" fill="none" stroke="#d0d0d0" strokeWidth="3">
              <rect x="3" y="7" width="54" height="55" />
              <path d="M15 34.500H45" />
            </svg>
            删自选
          </NavItem>
          <NavItem>
            <svg width="64" height="68" viewBox="0 0 64 68" fill="none" stroke="#d0d0d0" strokeWidth="3">
              <circle cx="32" cy="35" r="29" />
              <path d="M18 26.500H46M18 43.500H46" />
            </svg>
            功能
          </NavItem>
        </NavItems>
        <HomeBar />
      </NavBar>
    </Page>
  );
};

export default App;
